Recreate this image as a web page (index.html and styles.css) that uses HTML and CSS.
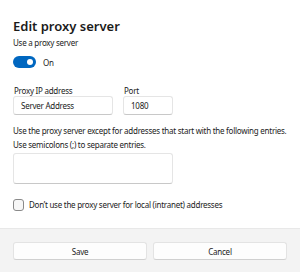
FILE: index.html
```html
<!DOCTYPE html>
<html lang="en">

<head>
  <meta charset="UTF-8">
  <meta name="viewport" content="width=device-width, initial-scale=1.0">
  <title>Edit proxy server</title>
  <link rel="stylesheet" href="styles.css">
</head>

<body>
  <div class="dialog">
    <div class="content">
      <h1 class="title">Edit proxy server</h1>
      <div class="label">Use a proxy server</div>
      <div class="switch-row">
        <span class="switch"><span class="knob"></span></span>
        <span class="switch-text">On</span>
      </div>

      <div class="fields">
        <div class="field field-ip">
          <div class="label">Proxy IP address</div>
          <input type="text" class="input" value="Server Address">
        </div>
        <div class="field field-port">
          <div class="label">Port</div>
          <input type="text" class="input" value="1080">
        </div>
      </div>

      <p class="desc">Use the proxy server except for addresses that start with the following entries.<br>Use semicolons (;) to separate entries.</p>
      <textarea class="exceptions"></textarea>

      <label class="check">
        <span class="box"></span>
        <span>Don’t use the proxy server for local (intranet) addresses</span>
      </label>
    </div>

    <div class="footer">
      <button class="btn">Save</button>
      <button class="btn">Cancel</button>
    </div>
  </div>
</body>

</html>
```

FILE: styles.css
```css
* {
  margin: 0;
  padding: 0;
  box-sizing: border-box;
  outline: none;
}

body {
  font-family: "Noto Sans", "Open Sans", sans-serif;
  font-size: 8px;
  letter-spacing: -0.25px;
  color: #1b1b1b;
  background: #fff;
}

.dialog {
  width: 300px;
  height: 272px;
  display: flex;
  flex-direction: column;
  background: #fff;
}

.content {
  flex: 1;
  padding: 16px 13px 0;
}

.title {
  font-size: 13px;
  font-weight: 600;
  line-height: 20px;
  letter-spacing: 0;
}

.label {
  line-height: 12px;
  margin-top: 1px;
}

.switch-row {
  display: flex;
  align-items: center;
  gap: 7px;
  margin-top: 7px;
  height: 12px;
}

.switch {
  width: 23px;
  height: 12px;
  border-radius: 6px;
  background: #0067c0;
  position: relative;
}

.knob {
  position: absolute;
  right: 3px;
  top: 3px;
  width: 6px;
  height: 6px;
  border-radius: 50%;
  background: #fff;
}

.fields {
  display: flex;
  gap: 10px;
  margin-top: 17px;
}

.field .label {
  margin-top: 0;
  line-height: 11px;
  padding-left: 1px;
}

.field-ip {
  width: 100px;
}

.field-port {
  width: 50px;
}

.input {
  display: block;
  width: 100%;
  height: 19px;
  border: 1px solid #e5e5e5;
  border-bottom-color: #c8c8c8;
  border-radius: 3px;
  padding: 0 7px;
  font: inherit;
  letter-spacing: inherit;
  color: #1b1b1b;
  background: #fff;
}

.desc {
  margin-top: 9px;
  line-height: 14px;
  white-space: nowrap;
}

.exceptions {
  display: block;
  margin-top: 1px;
  width: 160px;
  height: 31px;
  border: 1px solid #e5e5e5;
  border-bottom-color: #c8c8c8;
  border-radius: 3px;
  resize: none;
  font: inherit;
}

.check {
  display: flex;
  align-items: center;
  gap: 5px;
  margin-top: 15px;
  line-height: 12px;
}

.box {
  width: 11px;
  height: 12px;
  border: 1px solid #8a8a8a;
  border-radius: 3px;
  background: #f7f7f7;
}

.footer {
  height: 44px;
  background: #f3f3f3;
  border-top: 1px solid #e8e8e8;
  padding: 13px 13px 0;
  display: grid;
  grid-template-columns: 1fr 1fr;
  gap: 6px;
  align-items: start;
}

.btn {
  height: 18px;
  border: 1px solid #e3e3e3;
  border-bottom-color: #d0d0d0;
  border-radius: 3px;
  background: #fdfdfd;
  font: inherit;
  letter-spacing: inherit;
  color: #1b1b1b;
}
```
